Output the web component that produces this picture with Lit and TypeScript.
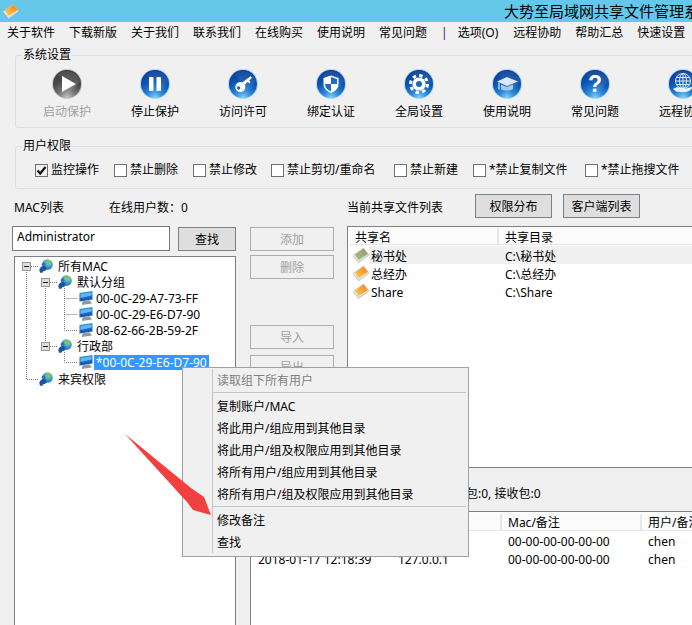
import { LitElement, html, css, svg } from "lit";
import { customElement } from "lit/decorators.js";

const glyphs: Record<string, unknown> = {
  play: svg`<polygon points="10,7 24,15 10,23" fill="#fff"/>`,
  pause: svg`<rect x="9" y="8" width="4.5" height="14" rx=".8" fill="#fff"/><rect x="16.5" y="8" width="4.5" height="14" rx=".8" fill="#fff"/>`,
  key: svg`<g fill="#fff"><path d="M22.5 7.2 24 8.8 16.8 15.8a5 5 0 1 1-2.6-2.4z"/><rect x="19" y="11.5" width="3.4" height="2" transform="rotate(44 20.7 12.5)"/></g><circle cx="10.6" cy="19" r="1.7" fill="#1a63bb"/>`,
  shield: svg`<path d="M15 6.5 22.5 9v6c0 4.5-3.2 7.2-7.5 9-4.3-1.8-7.5-4.5-7.5-9V9z" fill="#fff"/><path d="M15 8 21 10v5H15zM15 15v7.4C11.800 21 9 18.800 9 15z" fill="#1f6cc4"/>`,
  gear: svg`<circle cx="15" cy="15" r="6.600" fill="#fff"/><circle cx="15" cy="15" r="8.500" fill="none" stroke="#fff" stroke-width="3" stroke-dasharray="3.400 3.270"/><circle cx="15" cy="15" r="3" fill="#1c66bf"/>`,
  cap: svg`<polygon points="15,8 26,12.500 15,17 5,12.500" fill="#dbe9f6"/><path d="M9 15.500v4.500c2 2 10 2 12 0v-4.500l-6 2.500z" fill="#a9c8e6"/><path d="M7 13.500v7" stroke="#dbe9f6" stroke-width="1.200"/>`,
  help: svg`<text x="15" y="23" text-anchor="middle" font-family="Liberation Sans" font-weight="700" font-size="23" fill="#fff">?</text>`,
  remote: svg`<g fill="none" stroke="#dbe9f6" stroke-width="1"><circle cx="15" cy="12" r="7.500"/><ellipse cx="15" cy="12" rx="3.500" ry="7.500"/><path d="M7.500 12h15M8.500 8.500h13M8.500 15.500h13M15 4.500v15"/></g><path d="M5 20c3-2 6-2 8-1l5 .5c2 0 5-1.500 7-2-1 2.500-4 5-7 5.500-4 .5-7-.5-9 0z" fill="#eaf3fb"/>`,
};

const orb = (name: string, gray = false) => html`<svg class="orb" viewBox="0 0 30 30">
  <circle cx="15" cy="15" r="15" fill=${gray ? "#c4c4c4" : "#a9d3ef"}/>
  <circle cx="15" cy="15" r="14" fill=${gray ? "url(#orbGray)" : "url(#orbBlue)"}/>
  <path d="M6 6A13 13 0 0 1 28 12C24 18 20 22 14 24C16 16 12 10 6 6Z" fill="#fff" opacity=${gray ? ".1" : ".07"}/>
  ${glyphs[name]}
</svg>`;

const book = (selected = false) => html`<svg class="book" viewBox="0 0 16 16">
  <polygon points="0,8.500 10.500,1 16,8 5.500,15.800" fill="#f6f6f6" stroke="#a8a8a8" stroke-width=".6"/>
  <polygon points="1.800,7.800 10.500,1.500 15,7 5.800,13" fill=${selected ? "url(#bookSel)" : "url(#bookOn)"}/>
  <path d="M1.800 9.200 5.800 14.300 15 8.300" fill="none" stroke="#c9c9c9" stroke-width=".8"/>
</svg>`;

const globe = () => html`<svg class="ti" viewBox="0 0 14 14">
  <circle cx="8.500" cy="5.500" r="5.300" fill="url(#globeFill)"/>
  <path d="M6.500 2.500c1.500-1.500 3.500-1.500 5-.5l.5 2.500-3 1.500-1-1.500z" fill="#7cc84e"/>
  <path d="M.300 11c.7-3 3-4.500 5.200-4 1.700.5 2.300 2.300 1.700 4-1 1-2.200 1.300-3.200 1.300l-.5 1.500H1z" fill="#1a55a5"/>
  <circle cx="4.500" cy="5.300" r="1.800" fill="#2c6fc0"/>
</svg>`;

const pc = () => html`<svg class="ti" viewBox="0 0 14 14">
  <polygon points="0.500,2 13.500,0 13.500,8.500 0.500,10.500" fill="url(#pcFill)"/>
  <polygon points="1.500,3 12.500,1.300 12.500,4.500 1.500,7" fill="#5fb8f2"/>
  <polygon points="3.500,10.300 10.500,9.200 13,12.500 3,14" fill="#8f99a4"/>
</svg>`;

const check = (label: string, on = false) => html`<label class="chk">
  <span class=${on ? "box on" : "box"}>${on ? html`<svg viewBox="0 0 11 11"><path d="M1.500 5.500 4.200 8.500 9.500 2" fill="none" stroke="#111" stroke-width="2.200"/></svg>` : ""}</span>
  <span>${label}</span>
</label>`;

@customElement("app-root")
export class AppRoot extends LitElement {
  static styles = css`
    :host { display: block; }
    * { box-sizing: border-box; }
    .app {
      position: relative; width: 692px; height: 625px; overflow: hidden;
      display: flex; flex-direction: column; background: #f0f0f0; color: #000;
      font: 12px/16px "Noto Sans", "Noto Sans CJK SC", sans-serif; white-space: nowrap;
    }
    .defs { display: block; width: 0; height: 0; flex: none; }
    .title { flex: none; height: 22px; background: #64c8ea; display: flex; align-items: center; padding-left: 3px; font-size: 15px; }
    .title .book { width: 16px; height: 16px; margin-right: 485px; flex: none; }
    .menu { flex: none; height: 22px; display: flex; align-items: center; gap: 14px; padding-left: 7px; }
    .menu .bar { color: #5a1060; margin-right: -4px; }
    .menu .opt { margin-right: 1px; }
    fieldset { flex: none; margin: 0 0 0 15px; width: 700px; border: 1px solid #d6e0e8; border-radius: 3px; padding: 0; min-width: 0; }
    legend { margin-left: 6px; padding: 0 1px; line-height: 14px; }
    .sys { margin-top: 4px; padding: 7px 0; }
    .tools { display: grid; grid-template-columns: repeat(8, 88px); margin-left: 7px; }
    .tool { display: flex; flex-direction: column; align-items: center; gap: 5px; }
    .tool.off { color: #a0a0a0; }
    .orb { width: 30px; height: 30px; display: block; }
    .perm { margin-top: 11px; padding: 9px 0 10px; }
    .checks { display: grid; grid-template-columns: 79px 79px 78px 123px 79px 112px 120px; margin-left: 19px; }
    .chk { display: flex; align-items: center; gap: 3px; }
    .box { width: 13px; height: 13px; border: 1px solid #707070; background: #fff; display: block; flex: none; }
    .box.on { background: #f0f0f0; }
    .box svg { display: block; width: 11px; height: 11px; }
    .lower { flex: none; height: 431px; display: flex; margin-top: 5px; padding-left: 12px; gap: 14px; }
    .left { flex: none; width: 224px; display: flex; flex-direction: column; }
    .left-head { flex: none; height: 32px; padding: 6px 0 0 2px; display: flex; }
    .left-head .mac { width: 95px; }
    .search { flex: none; display: flex; gap: 8px; height: 25px; align-items: flex-end; }
    .search input {
      width: 158px; height: 25px; border: 1px solid #7a7a7a; background: #fff; padding: 0 0 5px 4px; margin: 0;
      font: inherit; color: #000; outline: none;
    }
    button { font: inherit; color: #000; padding: 2px 0 0; margin: 0; border: 1px solid #808080; background: #dedede; height: 24px; display: block; flex: none; }
    button.off { color: #a0a0a0; border-color: #adadad; background: #f0f0f0; }
    .search button { width: 58px; }
    .tree { position: relative; margin: 5px 0 0 2px; width: 222px; height: 400px; border: 1px solid #808080; background: #fff; padding-top: 1px; flex: none; }
    .lines { position: absolute; left: 0; top: 0; width: 220px; height: 140px; }
    .row { position: relative; height: 16px; display: flex; align-items: center; }
    .row.l0 { padding-left: 7px; }
    .row.l1 { padding-left: 26px; }
    .row.l2 { padding-left: 64px; }
    .row.last { margin-top: 1px; }
    .exp { width: 9px; height: 9px; border: 1px solid #979797; background: #dcdcdc; display: flex; align-items: center; justify-content: center; margin-right: 8px; flex: none; }
    .exp::after { content: ""; width: 5px; height: 1px; background: #222; }
    .gap { width: 9px; margin-right: 8px; flex: none; }
    .ti { width: 14px; height: 14px; display: block; flex: none; margin-right: 5px; }
    .row.l2 .ti { margin-right: 1px; }
    .row .txt { padding: 0 2px; line-height: 15px; }
    .row.l0 .txt, .row.l1 .txt { padding: 0; }
    .row .txt.sel { background: #3399ff; color: #fff; }
    .right { flex: none; width: 460px; display: flex; flex-direction: column; }
    .right-top { display: flex; gap: 13px; height: 274px; flex: none; }
    .mid { flex: none; width: 84px; padding-top: 33px; display: flex; flex-direction: column; gap: 4px; }
    .mid .space { height: 38px; }
    .mid .low { margin-top: 2px; }
    .shares { flex: 1; min-width: 0; display: flex; flex-direction: column; }
    .share-head { flex: none; height: 32px; display: flex; align-items: flex-start; gap: 11px; }
    .share-head span { width: 117px; margin-top: 6px; }
    .share-head button { width: 77px; }
    .list { flex: 1; border: 1px solid #808080; border-right: 0; background: #fff; padding: 1px 0 0 1px; }
    .hdr { height: 17px; display: grid; grid-template-rows: 16px; background: #fbfbfb; border-bottom: 1px solid #e6e6e6; line-height: 18px; }
    .hdr > span { border-right: 2px solid #e6e6e6; }
    .share-hdr { grid-template-columns: 150px 1fr; margin-bottom: 1px; line-height: 20px; }
    .share-hdr > span:first-child { padding-left: 6px; }
    .share-hdr > span:last-child { padding-left: 6px; border: 0; }
    .srow { height: 18px; display: flex; align-items: center; }
    .srow .book { width: 16px; height: 16px; margin-left: 4px; flex: none; }
    .srow .rest { flex: 1; height: 18px; display: grid; grid-template-columns: 130px 1fr; grid-template-rows: 18px; line-height: 22px; }
    .srow .rest.sel { background: #f0f0f0; }
    .srow .rest span:first-child { padding-left: 2px; }
    .srow .rest span:last-child { padding-left: 6px; }
    .status { flex: none; height: 43px; padding: 18px 0 0 192px; }
    .log { flex: 1; border: 1px solid #808080; border-right: 0; border-bottom: 0; background: #fff; padding: 2px 0 0 1px; }
    .log-hdr, .lrow { display: grid; grid-template-columns: 140px 110px 140px 148px; }
    .log-hdr > span, .lrow > span { padding-left: 6px; }
    .lrow { height: 18px; line-height: 20px; }
    .log-hdr { margin-bottom: 1px; }
    .ctx {
      position: absolute; left: 182px; top: 367px; width: 287px; height: 190px; background: #f0f0f0;
      border: 1px solid #a0a0a0; display: flex; padding: 1px 2px 3px 0;
    }
    .gut { flex: none; width: 30px; border-right: 1px solid #c4c4c4; }
    .items { flex: 1; }
    .it { height: 22px; line-height: 24px; padding-left: 4px; }
    .it.dis { color: #808080; }
    .sep { height: 4px; padding-top: 1px; }
    .sep::after { content: ""; display: block; height: 1px; background: #c4c4c4; }
    .arrow { position: absolute; left: 120px; top: 430px; width: 100px; height: 90px; }
  `;

  render() {
    const tools: [string, string][] = [
      ["pause", "停止保护"], ["key", "访问许可"], ["shield", "绑定认证"], ["gear", "全局设置"],
      ["cap", "使用说明"], ["help", "常见问题"], ["remote", "远程协助"],
    ];
    const menus = ["关于软件", "下载新版", "关于我们", "联系我们", "在线购买", "使用说明", "常见问题"];
    const menus2 = ["选项(O)", "远程协助", "帮助汇总", "快速设置"];
    return html`<div class="app">
      <svg class="defs">
        <defs>
          <radialGradient id="orbBlue" cx=".5" cy="1" r="1">
            <stop offset="0" stop-color="#7fd4f8"/><stop offset=".3" stop-color="#2b86d8"/>
            <stop offset=".6" stop-color="#0f57b4"/><stop offset="1" stop-color="#0a3a92"/>
          </radialGradient>
          <radialGradient id="orbGray" cx=".5" cy="1" r="1">
            <stop offset="0" stop-color="#c8c8c8"/><stop offset=".3" stop-color="#7a7a7a"/>
            <stop offset=".6" stop-color="#4c4c4c"/><stop offset="1" stop-color="#383838"/>
          </radialGradient>
          <linearGradient id="bookOn" x1="0" y1="1" x2="1" y2="0">
            <stop offset="0" stop-color="#ffd24a"/><stop offset=".6" stop-color="#f7a030"/><stop offset="1" stop-color="#f07f1e"/>
          </linearGradient>
          <linearGradient id="bookSel" x1="0" y1="1" x2="1" y2="0">
            <stop offset="0" stop-color="#a9c08a"/><stop offset=".6" stop-color="#9aa878"/><stop offset="1" stop-color="#b08a60"/>
          </linearGradient>
          <radialGradient id="globeFill" cx=".6" cy=".3" r=".8">
            <stop offset="0" stop-color="#9fe08a"/><stop offset=".5" stop-color="#3f9bd8"/><stop offset="1" stop-color="#1b5fae"/>
          </radialGradient>
          <linearGradient id="pcFill" x1="0" y1="0" x2="0" y2="1">
            <stop offset="0" stop-color="#2f8fe0"/><stop offset="1" stop-color="#0f4fa8"/>
          </linearGradient>
        </defs>
      </svg>
      <div class="title">${book()}<span>大势至局域网共享文件管理系统</span></div>
      <div class="menu">
        ${menus.map((m) => html`<span>${m}</span>`)}
        <span class="bar">|</span>
        ${menus2.map((m, i) => html`<span class=${i === 0 ? "opt" : ""}>${m}</span>`)}
      </div>
      <fieldset class="sys">
        <legend>系统设置</legend>
        <div class="tools">
          <div class="tool off">${orb("play", true)}<span>启动保护</span></div>
          ${tools.map(([g, t]) => html`<div class="tool">${orb(g)}<span>${t}</span></div>`)}
        </div>
      </fieldset>
      <fieldset class="perm">
        <legend>用户权限</legend>
        <div class="checks">
          ${check("监控操作", true)}${check("禁止删除")}${check("禁止修改")}${check("禁止剪切/重命名")}
          ${check("禁止新建")}${check("*禁止复制文件")}${check("*禁止拖搜文件")}
        </div>
      </fieldset>
      <div class="lower">
        <div class="left">
          <div class="left-head"><span class="mac">MAC列表</span><span>在线用户数：0</span></div>
          <div class="search"><input .value=${"Administrator"} /><button>查找</button></div>
          <div class="tree">
            <svg class="lines" viewBox="0 0 220 140" fill="none" stroke="#777" stroke-dasharray="1 1">
              <path d="M11.500 15V122.500H23M16 9.500H24"/>
              <path d="M30.500 31V89M35 25.500H43M35 89.500H43"/>
              <path d="M49.500 31V73.500H63M49.500 41.500H63M49.500 57.500H63M49.500 95V105.500H63"/>
            </svg>
            <div class="row l0"><span class="exp"></span>${globe()}<span class="txt">所有MAC</span></div>
            <div class="row l1"><span class="exp"></span>${globe()}<span class="txt">默认分组</span></div>
            <div class="row l2">${pc()}<span class="txt">00-0C-29-A7-73-FF</span></div>
            <div class="row l2">${pc()}<span class="txt">00-0C-29-E6-D7-90</span></div>
            <div class="row l2">${pc()}<span class="txt">08-62-66-2B-59-2F</span></div>
            <div class="row l1"><span class="exp"></span>${globe()}<span class="txt">行政部</span></div>
            <div class="row l2">${pc()}<span class="txt sel">*00-0C-29-E6-D7-90</span></div>
            <div class="row l0 last"><span class="gap"></span>${globe()}<span class="txt">来宾权限</span></div>
          </div>
        </div>
        <div class="right">
          <div class="right-top">
            <div class="mid">
              <button class="off">添加</button>
              <button class="off">删除</button>
              <div class="space"></div>
              <button class="off">导入</button>
              <button class="off low">导出</button>
            </div>
            <div class="shares">
              <div class="share-head"><span>当前共享文件列表</span><button>权限分布</button><button>客户端列表</button></div>
              <div class="list">
                <div class="hdr share-hdr"><span>共享名</span><span>共享目录</span></div>
                <div class="srow">${book(true)}<div class="rest sel"><span>秘书处</span><span>C:\\秘书处</span></div></div>
                <div class="srow">${book()}<div class="rest"><span>总经办</span><span>C:\\总经办</span></div></div>
                <div class="srow">${book()}<div class="rest"><span>Share</span><span>C:\\Share</span></div></div>
              </div>
            </div>
          </div>
          <div class="status">发送包:0, 接收包:0</div>
          <div class="log">
            <div class="hdr log-hdr"><span>时间</span><span>IP</span><span>Mac/备注</span><span>用户/备注</span></div>
            <div class="lrow"><span>2018-01-17 12:18:39</span><span>127.0.0.1</span><span>00-00-00-00-00-00</span><span>chen</span></div>
            <div class="lrow"><span>2018-01-17 12:18:39</span><span>127.0.0.1</span><span>00-00-00-00-00-00</span><span>chen</span></div>
          </div>
        </div>
      </div>
      <div class="ctx">
        <div class="gut"></div>
        <div class="items">
          <div class="it dis">读取组下所有用户</div>
          <div class="sep"></div>
          <div class="it">复制账户/MAC</div>
          <div class="it">将此用户/组应用到其他目录</div>
          <div class="it">将此用户/组及权限应用到其他目录</div>
          <div class="it">将所有用户/组应用到其他目录</div>
          <div class="it">将所有用户/组及权限应用到其他目录</div>
          <div class="sep"></div>
          <div class="it">修改备注</div>
          <div class="it">查找</div>
        </div>
      </div>
      <svg class="arrow" viewBox="120 430 100 90">
        <polygon points="125,434 191,488 204,497 211,515 193,510 187,502" fill="#f23f3f"/>
      </svg>
    </div>`;
  }
}
